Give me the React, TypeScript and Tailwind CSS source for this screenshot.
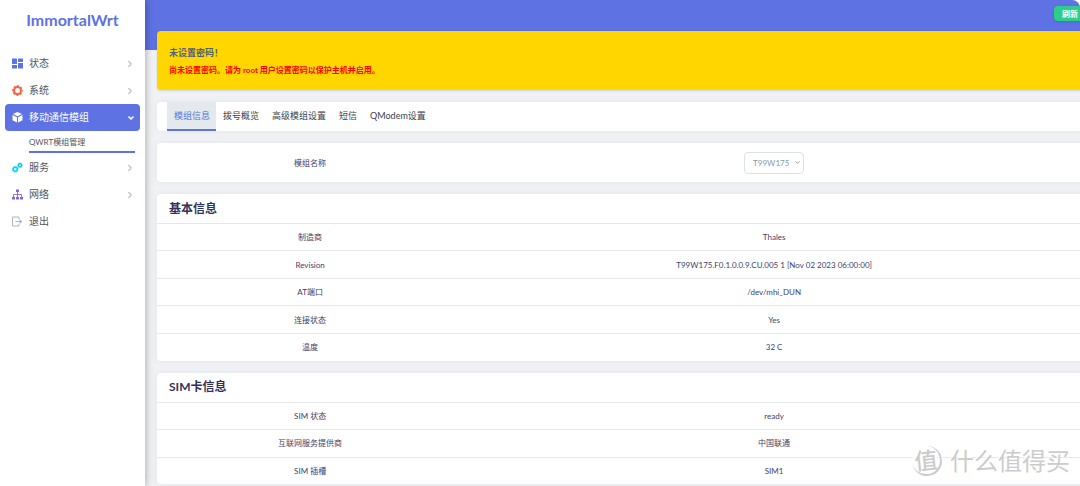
import React from 'react';
import { ChevronDown, ChevronRight } from 'lucide-react';

const menu = [
  { label: '状态', icon: 'status' },
  { label: '系统', icon: 'system' },
  { label: '移动通信模组', icon: 'modem' },
  { label: '服务', icon: 'services' },
  { label: '网络', icon: 'network' },
  { label: '退出', icon: 'logout' },
];

const tabs = ['模组信息', '拨号概览', '高级模组设置', '短信', 'QModem设置'];

const basicInfo = [
  ['制造商', 'Thales'],
  ['Revision', 'T99W175.F0.1.0.0.9.CU.005 1 [Nov 02 2023 06:00:00]'],
  ['AT端口', '/dev/mhi_DUN'],
  ['连接状态', 'Yes'],
  ['温度', '32 C'],
];

const simInfo = [
  ['SIM 状态', 'ready'],
  ['互联网服务提供商', '中国联通'],
  ['SIM 插槽', 'SIM1'],
];

const MenuIcon: React.FC<{ name: string }> = ({ name }) => {
  switch (name) {
    case 'status':
      return (
        <svg className="w-[11px] h-[11px] shrink-0 text-[#5e72e4]" viewBox="0 0 22 22" fill="currentColor">
          <path d="M0 1h10v11H0zM0 14h10v7H0zM12 1h10v7H12zM12 10h10v11H12z" />
        </svg>
      );
    case 'system':
      return (
        <svg className="w-[11px] h-[11px] shrink-0 text-[#fb6340]" viewBox="0 0 22 22" fill="none" stroke="currentColor">
          <circle cx="11" cy="11" r="7" strokeWidth="4" />
          <circle cx="11" cy="11" r="9" strokeWidth="3.6" strokeDasharray="3.8 3.27" strokeDashoffset="1.9" />
        </svg>
      );
    case 'modem':
      return (
        <svg className="w-[11px] h-[11px] shrink-0 text-white" viewBox="0 0 22 22" fill="currentColor">
          <path d="M11 0l9 4-9 4.5L2 4zM1 6l9 4.5V21l-9-4.5zM21 6l-9 4.5V21l9-4.5z" />
        </svg>
      );
    case 'services':
      return (
        <svg className="w-[11px] h-[11px] shrink-0 text-[#11cdef]" viewBox="0 0 22 22" fill="none" stroke="currentColor">
          <circle cx="6.5" cy="14.5" r="4" strokeWidth="3" />
          <circle cx="6.5" cy="14.5" r="5.6" strokeWidth="2" strokeDasharray="2.4 2" />
          <circle cx="16" cy="6.5" r="3.2" strokeWidth="3" />
          <circle cx="16" cy="6.5" r="4.8" strokeWidth="2" strokeDasharray="2 1.77" />
        </svg>
      );
    case 'network':
      return (
        <svg className="w-[11px] h-[11px] shrink-0 text-[#8965e0]" viewBox="0 0 22 22" fill="currentColor">
          <path d="M8 1h6v5H8zM0 16h6v5H0zM8 16h6v5H8zM16 16h6v5h-6z" />
          <path d="M11 6v10M3 16v-5h16v5" fill="none" stroke="currentColor" strokeWidth="1.8" />
        </svg>
      );
    default:
      return (
        <svg className="w-[11px] h-[11px] shrink-0 text-[#adb5bd]" viewBox="0 0 22 22" fill="none" stroke="currentColor" strokeWidth="2">
          <path d="M14 6V2H1v18h13v-4M7 11h12" />
          <path d="M15 6l6 5-6 5z" fill="currentColor" stroke="none" />
        </svg>
      );
  }
};

const InfoCard: React.FC<{ title: string; rows: string[][] }> = ({ title, rows }) => (
  <section className="bg-white rounded shadow-[0_0_6px_rgba(136,152,170,0.15)]">
    <h3 className="h-[29px] px-3 flex items-center text-[12px] font-bold text-[#32325d]">{title}</h3>
    <table className="w-full table-fixed text-[8px] leading-3 text-center text-[#41416a]">
      <tbody>
        {rows.map(([label, value]) => (
          <tr key={label} className="h-[27px] even:h-7 border-t border-[#e5e7ea]">
            <th scope="row" className="w-[33%] font-normal">{label}</th>
            <td>{value}</td>
          </tr>
        ))}
      </tbody>
    </table>
  </section>
);

export default function App() {
  return (
    <div className="relative flex min-h-screen overflow-hidden bg-white rounded-tr-lg font-[Lato,'Noto_Sans_CJK_SC',sans-serif]">
      <aside className="relative z-10 w-[145px] shrink-0 bg-white shadow-[0_0_8px_rgba(0,0,0,0.35)]">
        <a href="#" className="flex h-10 items-center justify-center text-[16px] font-bold text-[#5e72e4]">
          ImmortalWrt
        </a>
        <nav className="px-[5px] pt-[10px] text-[10px] text-[#525559]">
          {menu.map((item) => {
            const active = item.icon === 'modem';
            return (
              <div key={item.label}>
                <a
                  href="#"
                  className={`flex h-[27px] items-center gap-[6px] rounded pl-[7px] pr-[5px] ${active ? 'bg-[#5e72e4] text-white' : ''}`}
                >
                  <MenuIcon name={item.icon} />
                  <span className="flex-1">{item.label}</span>
                  {active && <ChevronDown className="h-2 w-2" strokeWidth={5} />}
                  {!active && item.icon !== 'logout' && <ChevronRight className="h-2.5 w-2.5 text-[#bcc1cc]" strokeWidth={3} />}
                </a>
                {active && (
                  <a href="#" className="mb-px ml-6 mr-[5px] flex h-[22px] items-center border-b-2 border-[#5e72e4] pt-px text-[8px]">
                    QWRT模组管理
                  </a>
                )}
              </div>
            );
          })}
        </nav>
      </aside>

      <div className="relative min-w-0 flex-1 bg-[#f1f2f5]">
        <header className="flex h-[50px] items-start justify-end bg-[#5e72e4] pt-[6px]">
          <button className="-mr-1.5 h-[15px] rounded-sm bg-[#2dce89] px-2 text-[8px] font-bold text-white shadow">
            刷新
          </button>
        </header>

        <main className="relative -mt-[19px] -mr-[5px] space-y-3 pl-3">
          <div className="h-[59px] rounded bg-[#ffd600] px-3 pt-[15px] font-bold shadow">
            <h4 className="text-[9px] leading-[14px] text-[#525f7f]">未设置密码！</h4>
            <p className="mt-1 text-[8px] leading-3 text-[#ff0000]">尚未设置密码。请为 root 用户设置密码以保护主机并启用。</p>
          </div>

          <div className="flex h-[29px] rounded bg-white pl-[10px] text-[9px] text-[#404040] shadow-[0_0_6px_rgba(136,152,170,0.15)]">
            {tabs.map((tab, i) => (
              <a
                key={tab}
                href="#"
                className={`flex items-center border-b-2 pl-[7px] pr-1.5 ${i === 0 ? 'border-[#5e72e4] bg-[#e4e9ed] text-[#5e72e4]' : 'border-transparent'}`}
              >
                {tab}
              </a>
            ))}
          </div>

          <div className="flex h-[39px] items-center rounded bg-white text-center text-[8px] text-[#41416a] shadow-[0_0_6px_rgba(136,152,170,0.15)]">
            <label htmlFor="modem" className="w-[33%]">模组名称</label>
            <div className="flex-1">
              <div className="relative inline-block">
                <select id="modem" className="h-[22px] w-[60px] appearance-none rounded-sm border border-[#dee2e6] bg-white pl-2 text-[#8898aa]">
                  <option>T99W175</option>
                </select>
                <ChevronDown className="pointer-events-none absolute right-[3px] top-[7px] h-[7px] w-[7px] text-[#8898aa]" strokeWidth={3} />
              </div>
            </div>
          </div>

          <InfoCard title="基本信息" rows={basicInfo} />
          <InfoCard title="SIM卡信息" rows={simInfo} />
        </main>
      </div>

      <div className="pointer-events-none absolute bottom-[10px] right-[10px] z-20 flex items-center gap-2 text-[#cccccc] [text-shadow:-1px_-1px_0_#fff]">
        <span className="flex h-[30px] w-[30px] -rotate-6 items-center justify-center rounded-full border-b-2 border-r-2 border-[#cccccc] bg-white/60 font-medium text-[23px] leading-none">值</span>
        <span className="text-[24px] leading-[30px]">什么值得买</span>
      </div>
    </div>
  );
}
